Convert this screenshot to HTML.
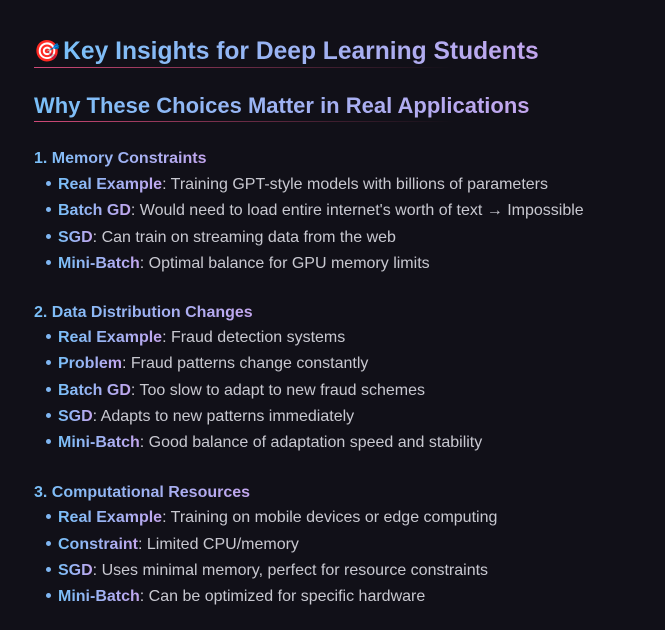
<!DOCTYPE html>
<html><head><meta charset="utf-8"><style>
html,body{margin:0;padding:0;background:#111018;width:665px;height:630px;overflow:hidden}
body{font-family:"Liberation Sans","Noto Sans CJK JP",sans-serif;color:#c8c8d0;position:relative}
.g{background:linear-gradient(90deg,#79bff8,#c3a6ee);-webkit-background-clip:text;background-clip:text;color:transparent;font-weight:bold}
.h{position:absolute;left:34px;white-space:nowrap}
.h1{top:38px;font-size:24.6px}
.h2{top:93px;font-size:22px}
.ul{position:absolute;left:34px;height:1px;width:420px;background:linear-gradient(90deg,#d14a78,rgba(209,74,120,0.25) 70%,rgba(209,74,120,0))}
.l{position:absolute;white-space:nowrap;font-size:16px}
.sh{left:34px}
.b{left:46px}
.b::before{content:"";display:inline-block;width:5px;height:5px;border-radius:50%;background:#7fb6f2;margin-right:7px;vertical-align:middle;position:relative;top:-1px}
</style></head><body>
<div class="h h1"><span style="font-size:21px;position:relative;top:-1px;margin-right:3px">🎯</span><span class="g">Key Insights for Deep Learning Students</span></div>
<div class="ul" style="top:67px"></div>
<div class="h h2"><span class="g">Why These Choices Matter in Real Applications</span></div>
<div class="ul" style="top:121px"></div>

<div class="l sh" style="top:150px"><span class="g">1. Memory Constraints</span></div>
<div class="l b" style="top:176px"><span class="g">Real Example</span>: Training GPT-style models with billions of parameters</div>
<div class="l b" style="top:202px"><span class="g">Batch GD</span>: Would need to load entire internet's worth of text → Impossible</div>
<div class="l b" style="top:229px"><span class="g">SGD</span>: Can train on streaming data from the web</div>
<div class="l b" style="top:255px"><span class="g">Mini-Batch</span>: Optimal balance for GPU memory limits</div>

<div class="l sh" style="top:304px"><span class="g">2. Data Distribution Changes</span></div>
<div class="l b" style="top:329px"><span class="g">Real Example</span>: Fraud detection systems</div>
<div class="l b" style="top:355px"><span class="g">Problem</span>: Fraud patterns change constantly</div>
<div class="l b" style="top:382px"><span class="g">Batch GD</span>: Too slow to adapt to new fraud schemes</div>
<div class="l b" style="top:408px"><span class="g">SGD</span>: Adapts to new patterns immediately</div>
<div class="l b" style="top:434px"><span class="g">Mini-Batch</span>: Good balance of adaptation speed and stability</div>

<div class="l sh" style="top:484px"><span class="g">3. Computational Resources</span></div>
<div class="l b" style="top:509px"><span class="g">Real Example</span>: Training on mobile devices or edge computing</div>
<div class="l b" style="top:536px"><span class="g">Constraint</span>: Limited CPU/memory</div>
<div class="l b" style="top:562px"><span class="g">SGD</span>: Uses minimal memory, perfect for resource constraints</div>
<div class="l b" style="top:588px"><span class="g">Mini-Batch</span>: Can be optimized for specific hardware</div>
</body></html>
